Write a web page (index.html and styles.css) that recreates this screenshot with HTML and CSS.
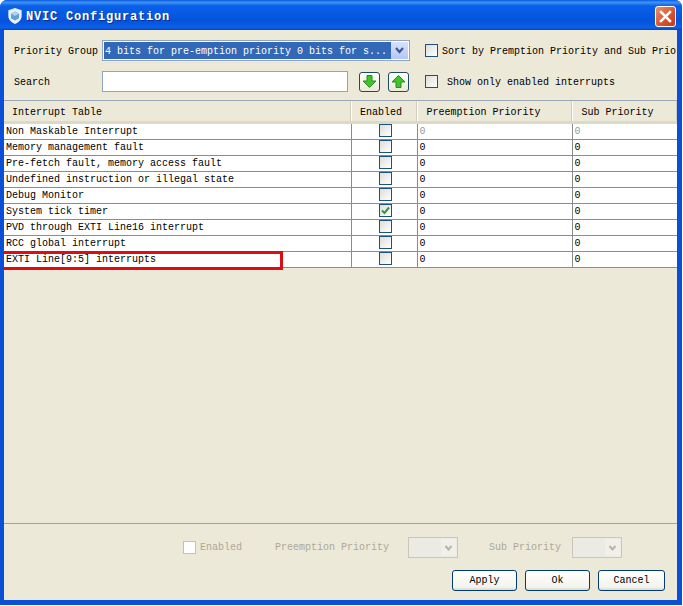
FILE: index.html
```html
<!DOCTYPE html>
<html lang="en">
<head>
    <meta charset="UTF-8">
    <title>NVIC Configuration</title>
    <link rel="stylesheet" href="styles.css">
</head>
<body>
    <div class="window">
        <div class="titlebar">
            <svg class="app-icon" width="16" height="18" viewBox="0 0 18 20">
                <path d="M9 1 L16.500 3.500 V10 C16.500 14.500 12.500 17.500 9 19 C5.500 17.500 1.500 14.500 1.500 10 V3.500 Z" fill="#e8f0fa"/>
                <path d="M9 5 L13.500 7.500 V12.500 L9 15 L4.500 12.500 V7.500 Z" fill="#5f9fd8"/>
                <path d="M9 5 L13.500 7.500 L9 10 L4.500 7.500 Z" fill="#a9d2f2"/>
            </svg>
            <span class="title">NVIC Configuration</span>
            <button class="close-button">
                <svg width="21" height="21" viewBox="0 0 21 21">
                    <path d="M6 6 L15 15 M15 6 L6 15" stroke="#fff" stroke-width="2.500" stroke-linecap="square"/>
                </svg>
            </button>
        </div>
        <div class="content">
            <div class="options">
                <div class="option-row">
                    <span class="option-label">Priority Group</span>
                    <div class="combo">
                        <span class="combo-value">4 bits for pre-emption priority 0 bits for s...</span>
                        <span class="combo-arrow">
                            <svg width="11" height="9" viewBox="0 0 11 9"><path d="M2 2 L5.500 6 L9 2" fill="none" stroke="#3d5a98" stroke-width="2.200"/></svg>
                        </span>
                    </div>
                    <span class="check"></span>
                    <span class="check-label">Sort by Premption Priority and Sub Priority</span>
                </div>
                <div class="option-row">
                    <span class="option-label">Search</span>
                    <div class="search-box"></div>
                    <div class="arrow-buttons">
                        <button class="arrow-button">
                            <svg width="15" height="15" viewBox="0 0 15 15"><path d="M5 1.500 H10 V7 H14 L7.500 13.500 L1 7 H5 Z" fill="#3fc52a" stroke="#2b8a1f"/></svg>
                        </button>
                        <button class="arrow-button">
                            <svg width="15" height="15" viewBox="0 0 15 15"><path d="M5 13.500 H10 V8 H14 L7.500 1.500 L1 8 H5 Z" fill="#3fc52a" stroke="#2b8a1f"/></svg>
                        </button>
                    </div>
                    <span class="check"></span>
                    <span class="check-label check-label-wide">Show only enabled interrupts</span>
                </div>
            </div>

            <div class="table-area">
                <table class="irq-table">
                    <colgroup>
                        <col class="col-name">
                        <col class="col-enabled">
                        <col class="col-preempt">
                        <col class="col-sub">
                    </colgroup>
                    <thead>
                        <tr>
                            <th class="head-name">Interrupt Table</th>
                            <th class="head-center">Enabled</th>
                            <th>Preemption Priority</th>
                            <th>Sub Priority</th>
                        </tr>
                    </thead>
                    <tbody>
                        <tr class="locked"><td>Non Maskable Interrupt</td><td><span class="check"></span></td><td>0</td><td>0</td></tr>
                        <tr><td>Memory management fault</td><td><span class="check"></span></td><td>0</td><td>0</td></tr>
                        <tr><td>Pre-fetch fault, memory access fault</td><td><span class="check"></span></td><td>0</td><td>0</td></tr>
                        <tr><td>Undefined instruction or illegal state</td><td><span class="check"></span></td><td>0</td><td>0</td></tr>
                        <tr><td>Debug Monitor</td><td><span class="check"></span></td><td>0</td><td>0</td></tr>
                        <tr><td>System tick timer</td><td><span class="check"><svg width="11" height="11" viewBox="0 0 11 11"><path d="M2 5.500 L4.500 8 L9 2.500" fill="none" stroke="#2f9a3c" stroke-width="2"/></svg></span></td><td>0</td><td>0</td></tr>
                        <tr><td>PVD through EXTI Line16 interrupt</td><td><span class="check"></span></td><td>0</td><td>0</td></tr>
                        <tr><td>RCC global interrupt</td><td><span class="check"></span></td><td>0</td><td>0</td></tr>
                        <tr><td>EXTI Line[9:5] interrupts</td><td><span class="check"></span></td><td>0</td><td>0</td></tr>
                    </tbody>
                </table>
                <div class="highlight"></div>
            </div>

            <div class="bottom">
                <div class="detail-row">
                    <span class="check check-disabled"></span>
                    <span class="detail-enabled">Enabled</span>
                    <span class="detail-preempt">Preemption Priority</span>
                    <span class="combo-disabled"><span class="combo-arrow-disabled"><svg width="9" height="8" viewBox="0 0 9 8"><path d="M1.500 2 L4.500 5.500 L7.500 2" fill="none" stroke="#b4b4a8" stroke-width="2"/></svg></span></span>
                    <span class="detail-sub">Sub Priority</span>
                    <span class="combo-disabled"><span class="combo-arrow-disabled"><svg width="9" height="8" viewBox="0 0 9 8"><path d="M1.500 2 L4.500 5.500 L7.500 2" fill="none" stroke="#b4b4a8" stroke-width="2"/></svg></span></span>
                </div>
                <div class="button-row">
                    <button class="push-button">Apply</button>
                    <button class="push-button">Ok</button>
                    <button class="push-button cancel-button">Cancel</button>
                </div>
            </div>
        </div>
    </div>
</body>
</html>
```
FILE: styles.css
```css
html, body {
    margin: 0;
    height: 100%;
    overflow: hidden;
    background: #fff;
}
body {
    font-family: "Liberation Mono", monospace;
    font-size: 10px;
    color: #000;
}
button {
    font-family: inherit;
    padding: 0;
}
.window {
    width: 682px;
    height: 605px;
    display: flex;
    flex-direction: column;
    background: #0a4fd6;
    border-radius: 7px 7px 0 0;
    overflow: hidden;
}
.titlebar {
    height: 30px;
    flex: none;
    display: flex;
    align-items: center;
    padding: 0 6px 0 7px;
    background: linear-gradient(180deg, #0a5be0 0%, #3d93f5 8%, #0a5fe8 20%, #0553dc 70%, #0a60ea 92%, #0645b8 100%);
}
.app-icon {
    flex: none;
    margin-top: 1px;
}
.title {
    margin-left: 3px;
    padding-top: 4px;
    color: #fff;
    font-size: 12px;
    font-weight: bold;
    letter-spacing: 0.8px;
    text-shadow: 1px 1px 0 #0a2f90;
}
.close-button {
    margin-left: auto;
    margin-top: 2px;
    width: 21px;
    height: 21px;
    border: 1px solid #fff;
    border-radius: 3px;
    background: linear-gradient(135deg, #e8906c, #d9502c 60%, #c03a1c);
    display: flex;
    align-items: center;
    justify-content: center;
}
.close-button svg {
    flex: none;
}
.content {
    flex: 1;
    margin: 0 5px 5px 4px;
    background: #ece9d8;
    display: flex;
    flex-direction: column;
    min-height: 0;
    overflow: hidden;
}
.options {
    height: 70px;
    flex: none;
    padding-top: 10px;
    box-sizing: border-box;
}
.option-row {
    display: flex;
    align-items: center;
    height: 21px;
    padding-left: 10px;
    margin-bottom: 10px;
    white-space: nowrap;
}
.option-label {
    width: 88px;
    flex: none;
    padding-top: 2px;
}
.combo {
    width: 308px;
    height: 21px;
    box-sizing: border-box;
    flex: none;
    display: flex;
    align-items: center;
    border: 1px solid #8ea4c0;
    background: #fff;
    padding: 1px;
}
.combo-value {
    flex: 1;
    height: 100%;
    line-height: 19px;
    padding-left: 1px;
    background: #3168b8;
    color: #fff;
    overflow: hidden;
}
.combo-arrow {
    width: 17px;
    height: 100%;
    flex: none;
    display: flex;
    align-items: center;
    justify-content: center;
    background: linear-gradient(180deg, #d8e2fb, #b4c6f4);
}
.check {
    width: 13px;
    height: 13px;
    flex: none;
    display: inline-flex;
    align-items: center;
    justify-content: center;
    box-sizing: border-box;
    border: 1px solid #1c5180;
    background: linear-gradient(135deg, #dcdcd7, #fff);
    vertical-align: top;
}
.option-row > .check {
    margin-left: 15px;
}
.check-label {
    margin-left: 4px;
    padding-top: 2px;
}
.check-label-wide {
    margin-left: 9px;
}
.search-box {
    width: 246px;
    height: 21px;
    flex: none;
    box-sizing: border-box;
    border: 1px solid #8ea4c0;
    background: #fff;
}
.arrow-buttons {
    display: flex;
    gap: 8px;
    margin-left: 11px;
    width: 51px;
    flex: none;
}
.arrow-button {
    width: 21px;
    height: 20px;
    flex: none;
    box-sizing: border-box;
    border: 1px solid #1f4a64;
    border-radius: 3px;
    background: linear-gradient(180deg, #fff, #ece9d8);
    display: flex;
    align-items: center;
    justify-content: center;
}
.table-area {
    flex: 1;
    position: relative;
    border-top: 1px solid #9aa8b8;
    border-bottom: 1px solid #8ea8c0;
    min-height: 0;
}
.irq-table {
    width: 673px;
    table-layout: fixed;
    border-collapse: collapse;
}
.col-name { width: 347px; }
.col-enabled { width: 66px; }
.col-preempt { width: 155px; }
.col-sub { width: 105px; }
.irq-table th {
    height: 21px;
    box-sizing: border-box;
    padding: 4px 0 0 9px;
    font-weight: normal;
    text-align: left;
    background: #ece9d8;
    border-right: 1px solid #fff;
    border-bottom: 3px solid #dcd9c8;
    box-shadow: inset -1px 0 0 #d0cdbc;
}
.irq-table th.head-name {
    padding-left: 8px;
}
.irq-table th.head-center {
    text-align: center;
    padding-left: 0;
    padding-right: 6px;
}
.irq-table td {
    height: 16px;
    box-sizing: border-box;
    padding: 0 0 0 2px;
    background: #fff;
    border-right: 1px solid #8c8c8c;
    border-bottom: 1px solid #8c8c8c;
    line-height: 15px;
    white-space: nowrap;
    overflow: hidden;
}
.irq-table td:nth-child(2) {
    text-align: center;
    padding: 0 0 0 2px;
}
.irq-table td:nth-child(3), .irq-table td:nth-child(4) {
    padding-left: 2px;
}
.locked td:nth-child(3), .locked td:nth-child(4) {
    color: #999;
}
.highlight {
    position: absolute;
    left: -4px;
    top: 150px;
    width: 277px;
    height: 13px;
    border: 3px solid #e00c14;
}
.bottom {
    height: 76px;
    flex: none;
    padding: 13px 0 0 0;
    box-sizing: border-box;
}
.detail-row {
    display: flex;
    align-items: center;
    height: 21px;
    padding-left: 179px;
    color: #aca899;
    white-space: nowrap;
}
.check-disabled {
    border-color: #c4c2b4;
    background: #fff;
}
.detail-enabled {
    margin-left: 4px;
    width: 75px;
    flex: none;
}
.detail-preempt {
    width: 133px;
    flex: none;
}
.detail-sub {
    margin-left: 31px;
    width: 83px;
    flex: none;
}
.combo-disabled {
    width: 50px;
    height: 21px;
    flex: none;
    box-sizing: border-box;
    border: 1px solid #c9c7ba;
    background: #ebebe4;
    display: flex;
    justify-content: flex-end;
    padding: 1px;
}
.combo-arrow-disabled {
    width: 15px;
    display: flex;
    align-items: center;
    justify-content: center;
    background: #f1f0e8;
}
.button-row {
    display: flex;
    justify-content: flex-end;
    gap: 8px;
    margin-top: 12px;
    padding-right: 12px;
}
.push-button {
    width: 65px;
    height: 21px;
    box-sizing: border-box;
    border: 1px solid #003c74;
    border-radius: 3px;
    background: linear-gradient(180deg, #fff, #f4f3ec 85%, #dcd8c8);
    font-size: 10px;
    color: #000;
}
.cancel-button {
    width: 67px;
}
```
